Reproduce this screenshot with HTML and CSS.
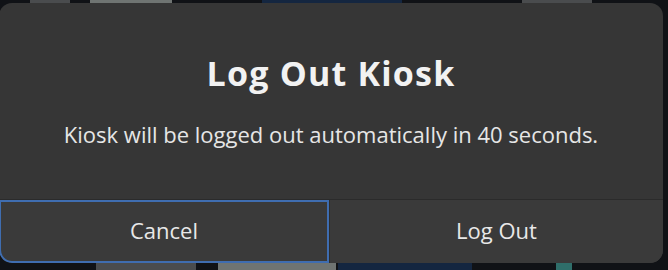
FILE: index.html
```html
<!doctype html>
<html lang="en">
  <head>
    <meta charset="UTF-8" />
    <meta name="viewport" content="width=device-width, initial-scale=1.0" />
    <title>Log Out Kiosk</title>
    <link rel="stylesheet" href="styles.css">
  </head>
  <body>
    <div class="desktop">
      <div class="strip strip-top">
        <span class="seg gray" style="width: 40px; margin-left: 30px"></span>
        <span class="seg light" style="width: 82px; margin-left: 20px"></span>
        <span class="seg navy" style="width: 140px; margin-left: 90px"></span>
        <span class="seg gray" style="width: 70px; margin-left: 120px"></span>
      </div>

      <div class="dialog" role="alertdialog">
        <div class="content">
          <h1 class="title">Log Out Kiosk</h1>
          <p class="message">Kiosk will be logged out automatically in 40 seconds.</p>
        </div>
        <div class="actions">
          <button class="action focused">Cancel</button>
          <button class="action">Log Out</button>
        </div>
      </div>

      <div class="strip strip-bottom">
        <span class="seg gray" style="width: 100px; margin-left: 96px"></span>
        <span class="seg light" style="width: 118px; margin-left: 22px"></span>
        <span class="seg navy" style="width: 134px; margin-left: 2px"></span>
        <span class="seg teal" style="width: 16px; margin-left: 84px"></span>
      </div>
    </div>
  </body>
</html>
```

FILE: styles.css
```css
body {
  margin: 0;
  height: 270px;
  overflow: hidden;
  background-color: #101216;
  font-family: "Open Sans", "Noto Sans", sans-serif;
}

.desktop {
  display: flex;
  flex-direction: column;
  height: 270px;
}

.strip {
  display: flex;
  align-items: stretch;
  flex: 1;
}

.strip-top {
  height: 3px;
  flex: none;
}

.seg {
  display: block;
}

.seg.gray {
  background-color: #4a4c4e;
}

.seg.light {
  background-color: #6f7472;
}

.seg.navy {
  background-color: #142640;
}

.seg.teal {
  background-color: #2f6e6a;
}

.dialog {
  flex: none;
  width: 664px;
  height: 260px;
  margin-left: -1px;
  display: flex;
  flex-direction: column;
  background-color: #363636;
  border-radius: 13px;
  overflow: hidden;
  color: #f2f2f2;
}

.content {
  flex: 1;
  display: flex;
  flex-direction: column;
  align-items: center;
  padding-top: 49px;
}

.title {
  margin: 0;
  font-size: 34px;
  font-weight: 700;
  letter-spacing: 1.2px;
  line-height: 42px;
}

.message {
  margin: 26px 0 0;
  font-size: 22px;
  line-height: 28px;
  color: #e6e6e6;
}

.actions {
  display: grid;
  grid-template-columns: 330px 1fr;
  height: 63px;
  border-top: 1px solid #2b2b2b;
}

.action {
  background-color: #3a3a3a;
  border: none;
  padding: 0 0 4px;
  color: #e8e8e8;
  font-family: inherit;
  font-size: 22px;
  cursor: pointer;
}

.action + .action {
  border-left: 1px solid #2e2e2e;
}

.action.focused {
  border: 2px solid #3f6db0;
  border-radius: 0 0 0 13px;
}
```
